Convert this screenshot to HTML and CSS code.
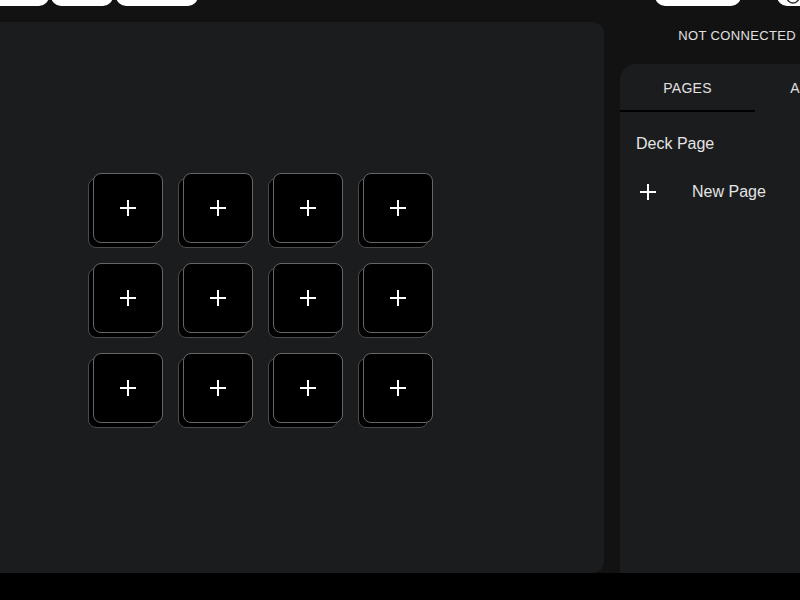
FILE: index.html
```html
<!DOCTYPE html>
<html>
<head>
<meta charset="utf-8">
<link rel="stylesheet" href="styles.css">
</head>
<body>
<div class="app">
  <header class="topbar">
    <div class="pills-left">
      <div class="pill pill-a"></div>
      <div class="pill pill-b"></div>
      <div class="pill pill-c"></div>
    </div>
    <div class="pills-right">
      <div class="pill pill-d"></div>
      <div class="pill pill-e">
        <svg width="20" height="20" viewBox="0 0 20 20"><circle cx="8" cy="-3" r="6" fill="none" stroke="#333" stroke-width="1.5"/></svg>
      </div>
    </div>
  </header>
  <main class="content">
    <section class="deck">
      <div class="grid">
        <div class="key"><span class="plus"></span></div>
        <div class="key"><span class="plus"></span></div>
        <div class="key"><span class="plus"></span></div>
        <div class="key"><span class="plus"></span></div>
        <div class="key"><span class="plus"></span></div>
        <div class="key"><span class="plus"></span></div>
        <div class="key"><span class="plus"></span></div>
        <div class="key"><span class="plus"></span></div>
        <div class="key"><span class="plus"></span></div>
        <div class="key"><span class="plus"></span></div>
        <div class="key"><span class="plus"></span></div>
        <div class="key"><span class="plus"></span></div>
      </div>
    </section>
    <aside class="side">
      <div class="status">NOT CONNECTED</div>
      <div class="panel">
        <div class="tabs">
          <div class="tab active">PAGES</div>
          <div class="tab">ACTIONS</div>
        </div>
        <div class="page-item">Deck Page</div>
        <div class="page-new"><span class="plus small"></span><span class="new-label">New Page</span></div>
      </div>
    </aside>
  </main>
  <footer class="bottombar"></footer>
</div>
</body>
</html>
```

FILE: styles.css
```css
html, body {
  margin: 0;
  padding: 0;
  width: 800px;
  height: 600px;
  overflow: hidden;
  background: #121212;
  font-family: "Liberation Sans", Arial, sans-serif;
  color: #e6e6e6;
}
.app {
  display: flex;
  flex-direction: column;
  height: 600px;
}
.topbar {
  height: 22px;
  display: flex;
  justify-content: space-between;
  flex: none;
}
.pills-left, .pills-right {
  display: flex;
  align-items: flex-start;
}
.pill {
  background: #ffffff;
  height: 30px;
  margin-top: -24px;
  border-radius: 10px;
}
.pill-a { width: 70px; margin-left: -21px; }
.pill-b { width: 62px; margin-left: 2px; }
.pill-c { width: 82px; margin-left: 3px; }
.pill-d { width: 86px; }
.pill-e { width: 60px; margin-left: 36px; margin-right: -37px; position: relative; }
.pill-e svg { position: absolute; left: 8px; top: 24px; }
.content {
  flex: 1;
  display: flex;
  gap: 16px;
  min-height: 0;
}
.deck {
  margin-left: -78px;
  width: 682px;
  flex: none;
  background: #1b1c1e;
  border-radius: 12px;
  display: flex;
  align-items: center;
  justify-content: center;
}
.grid {
  position: relative;
  z-index: 0;
  display: grid;
  grid-template-columns: repeat(4, 70px);
  grid-template-rows: repeat(3, 70px);
  gap: 20px;
  margin-top: 1px;
}
.key {
  position: relative;
  width: 70px;
  height: 70px;
  box-sizing: border-box;
  background: #000;
  border: 1px solid #666;
  border-radius: 8px;
  display: flex;
  align-items: center;
  justify-content: center;
}
.key::before {
  content: "";
  position: absolute;
  left: -6px;
  top: 4px;
  width: 70px;
  height: 70px;
  box-sizing: border-box;
  background: #000;
  border: 1px solid #4a4a4a;
  border-radius: 8px;
  z-index: -1;
}
.plus {
  position: relative;
  width: 16px;
  height: 16px;
  display: block;
}
.plus::before, .plus::after {
  content: "";
  position: absolute;
  background: #fff;
}
.plus::before { left: 0; top: 7px; width: 16px; height: 2px; }
.plus::after { left: 7px; top: 0; width: 2px; height: 16px; }
.side {
  flex: 1;
  display: flex;
  flex-direction: column;
  min-width: 0;
}
.status {
  height: 42px;
  line-height: 28px;
  font-size: 13px;
  letter-spacing: 0.35px;
  text-align: right;
  padding-right: 4px;
  color: #e0e0e0;
}
.panel {
  flex: 1;
  width: 260px;
  background: #1b1c1e;
  border-radius: 16px 0 0 0;
}
.tabs {
  display: flex;
  height: 48px;
  margin-bottom: 8px;
}
.tab {
  width: 135px;
  box-sizing: border-box;
  text-align: center;
  font-size: 14px;
  line-height: 48px;
  letter-spacing: 0.3px;
  color: #e0e0e0;
  flex: none;
}
.tab.active {
  border-bottom: 2px solid #000;
}
.page-item {
  padding-left: 16px;
  font-size: 16px;
  height: 48px;
  line-height: 48px;
  color: #e4e4e4;
}
.page-new {
  display: flex;
  align-items: center;
  height: 48px;
  padding-left: 20px;
  font-size: 16px;
  color: #e4e4e4;
}
.new-label { margin-left: 36px; }
.bottombar {
  height: 27px;
  background: #000;
  flex: none;
}
```
